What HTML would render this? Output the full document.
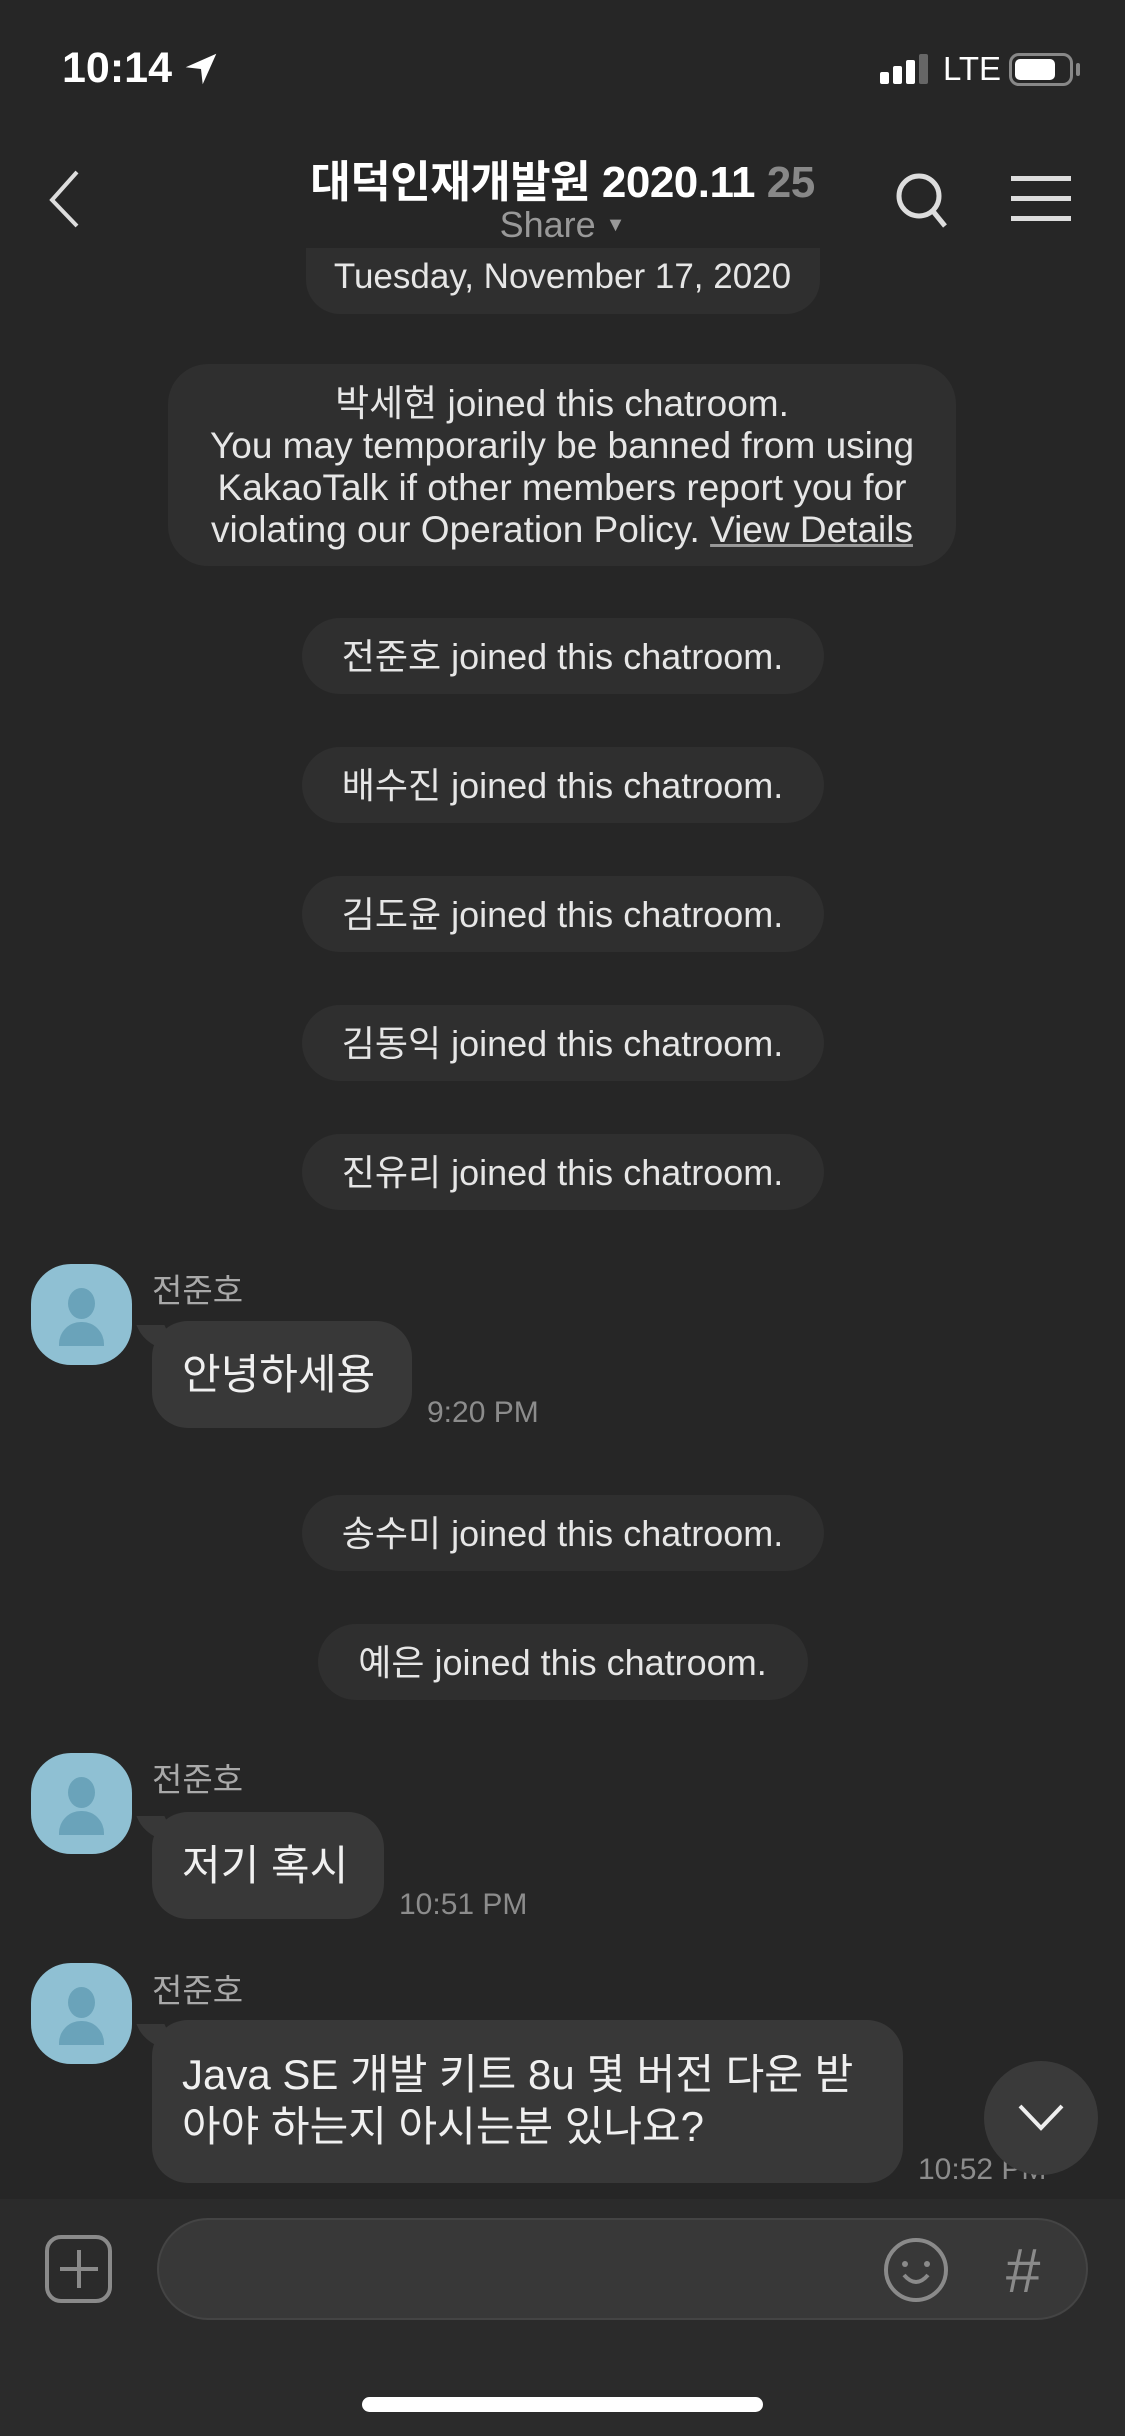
<!DOCTYPE html>
<html><head><meta charset="utf-8"><style>
*{margin:0;padding:0;box-sizing:border-box}
body{width:1125px;height:2436px;background:#262626;font-family:"Liberation Sans","Noto Sans CJK KR",sans-serif;color:#e8e8e8;position:relative;overflow:hidden}
.a{position:absolute}
.pill{position:absolute;left:50%;transform:translateX(-50%);height:76px;border-radius:38px;background:#2f2f2f;font-size:36px;line-height:78px;text-align:center;white-space:nowrap;color:#e6e6e6}
.av{position:absolute;left:31px;width:101px;height:101px;border-radius:40px;background:#8fc0d3;overflow:hidden}
.av .h{position:absolute;left:37px;top:24px;width:27px;height:31px;border-radius:50%;background:#6aa3ba}
.av .b{position:absolute;left:28px;top:58px;width:45px;height:24px;border-radius:22px 22px 0 0;background:#6aa3ba}
.nm{position:absolute;left:152px;font-size:33px;color:#a9a9a9}
.bub{position:absolute;left:152px;background:#383838;border-radius:36px;font-size:42px;color:#f0f0f0;padding:0 30px;white-space:nowrap}
.bub:before{content:"";position:absolute;left:-10px;top:4px;width:28px;height:24px;background:#383838;border-radius:0 0 0 20px;transform:skewX(25deg)}
.tm{position:absolute;font-size:30px;color:#8c8c8c}
</style></head><body>
<div class="a" style="left:62px;top:44px;font-size:43px;font-weight:bold;color:#fff">10:14</div>
<svg class="a" style="left:184px;top:52px" width="34" height="34" viewBox="0 0 20 20"><path d="M19 1 L1 9 L10 10 L11 19 Z" fill="#fff"/></svg>
<div class="a" style="left:880px;top:72px;width:9px;height:12px;background:#fff;border-radius:2px"></div>
<div class="a" style="left:893px;top:66px;width:9px;height:18px;background:#fff;border-radius:2px"></div>
<div class="a" style="left:906px;top:60px;width:9px;height:24px;background:#fff;border-radius:2px"></div>
<div class="a" style="left:919px;top:54px;width:9px;height:30px;background:#666;border-radius:2px"></div>
<div class="a" style="left:943px;top:50px;font-size:33px;color:#fff">LTE</div>
<div class="a" style="left:1009px;top:53px;width:64px;height:33px;border:3px solid #888;border-radius:10px"></div>
<div class="a" style="left:1015px;top:59px;width:40px;height:21px;background:#fff;border-radius:5px"></div>
<div class="a" style="left:1076px;top:63px;width:4px;height:13px;background:#888;border-radius:2px"></div>

<svg class="a" style="left:44px;top:168px" width="40" height="60"><path d="M33 4 L8 32 L33 58" stroke="#ddd" stroke-width="4" fill="none"/></svg>
<div class="a" style="left:0;width:1125px;top:146px;text-align:center;font-size:44px;font-weight:bold;color:#fff;letter-spacing:-0.5px">대덕인재개발원 2020.11 <span style="color:#888">25</span></div>
<div class="a" style="left:0;width:1125px;top:204px;text-align:center;font-size:36px;color:#999">Share <span style="font-size:20px;position:relative;top:-6px">▼</span></div>
<svg class="a" style="left:893px;top:170px" width="60" height="62"><circle cx="26" cy="26" r="20" stroke="#ddd" stroke-width="5" fill="none"/><path d="M39 40 L52 56" stroke="#ddd" stroke-width="5"/></svg>
<div class="a" style="left:1011px;top:176px;width:60px;height:5px;background:#ddd"></div>
<div class="a" style="left:1011px;top:196px;width:60px;height:5px;background:#ddd"></div>
<div class="a" style="left:1011px;top:216px;width:60px;height:5px;background:#ddd"></div>

<div class="pill" style="top:248px;width:514px;height:66px;line-height:58px;border-radius:0 0 34px 34px;font-size:35px">Tuesday, November 17, 2020</div>
<div class="a" style="left:168px;top:364px;width:788px;height:202px;border-radius:40px;background:#2f2f2f;font-size:37px;line-height:42px;text-align:center;padding-top:19px;color:#e6e6e6;white-space:nowrap">박세현 joined this chatroom.<br>You may temporarily be banned from using<br>KakaoTalk if other members report you for<br>violating our Operation Policy. <span style="text-decoration:underline;text-decoration-color:#999">View Details</span></div>
<div class="pill" style="top:618px;width:522px">전준호 joined this chatroom.</div>
<div class="pill" style="top:747px;width:522px">배수진 joined this chatroom.</div>
<div class="pill" style="top:876px;width:522px">김도윤 joined this chatroom.</div>
<div class="pill" style="top:1005px;width:522px">김동익 joined this chatroom.</div>
<div class="pill" style="top:1134px;width:522px">진유리 joined this chatroom.</div>

<div class="av" style="top:1264px"><div class="h"></div><div class="b"></div></div>
<div class="nm" style="top:1264px">전준호</div>
<div class="bub" style="top:1321px;height:107px;line-height:107px;width:260px">안녕하세용</div>
<div class="tm" style="left:427px;top:1396px">9:20 PM</div>

<div class="pill" style="top:1495px;width:522px">송수미 joined this chatroom.</div>
<div class="pill" style="top:1624px;width:490px">예은 joined this chatroom.</div>

<div class="av" style="top:1753px"><div class="h"></div><div class="b"></div></div>
<div class="nm" style="top:1753px">전준호</div>
<div class="bub" style="top:1812px;height:107px;line-height:107px;width:232px">저기 혹시</div>
<div class="tm" style="left:399px;top:1888px">10:51 PM</div>

<div class="av" style="top:1963px"><div class="h"></div><div class="b"></div></div>
<div class="nm" style="top:1964px">전준호</div>
<div class="bub" style="top:2020px;height:163px;width:751px;line-height:52px;padding-top:29px">Java SE 개발 키트 8u 몇 버전 다운 받<br>아야 하는지 아시는분 있나요?</div>
<div class="tm" style="left:918px;top:2153px">10:52 PM</div>
<div class="a" style="left:984px;top:2061px;width:114px;height:114px;border-radius:50%;background:#3a3a3a"></div>
<svg class="a" style="left:1016px;top:2100px" width="50" height="36"><path d="M4 6 L25 28 L46 6" stroke="#eee" stroke-width="4" fill="none"/></svg>

<div class="a" style="left:0;top:2199px;width:1125px;height:237px;background:#2b2b2b"></div>
<svg class="a" style="left:44px;top:2234px" width="70" height="72"><rect x="3" y="3" width="63" height="64" rx="14" stroke="#8a8a8a" stroke-width="4" fill="none"/><path d="M35 16 V54 M16 35 H54" stroke="#8a8a8a" stroke-width="4"/></svg>
<div class="a" style="left:157px;top:2218px;width:931px;height:102px;border-radius:51px;background:#383838;border:2px solid #444"></div>
<svg class="a" style="left:882px;top:2235px" width="68" height="70"><circle cx="34" cy="35" r="30" stroke="#8a8a8a" stroke-width="4" fill="none"/><circle cx="23" cy="29" r="3" fill="#8a8a8a"/><circle cx="45" cy="29" r="3" fill="#8a8a8a"/><path d="M22 40 Q34 54 46 40" stroke="#8a8a8a" stroke-width="4" fill="none"/></svg>
<div class="a" style="left:1005px;top:2236px;font-size:62px;color:#8a8a8a;font-style:italic">#</div>
<div class="a" style="left:362px;top:2397px;width:401px;height:15px;border-radius:8px;background:#fff"></div>
</body></html>
